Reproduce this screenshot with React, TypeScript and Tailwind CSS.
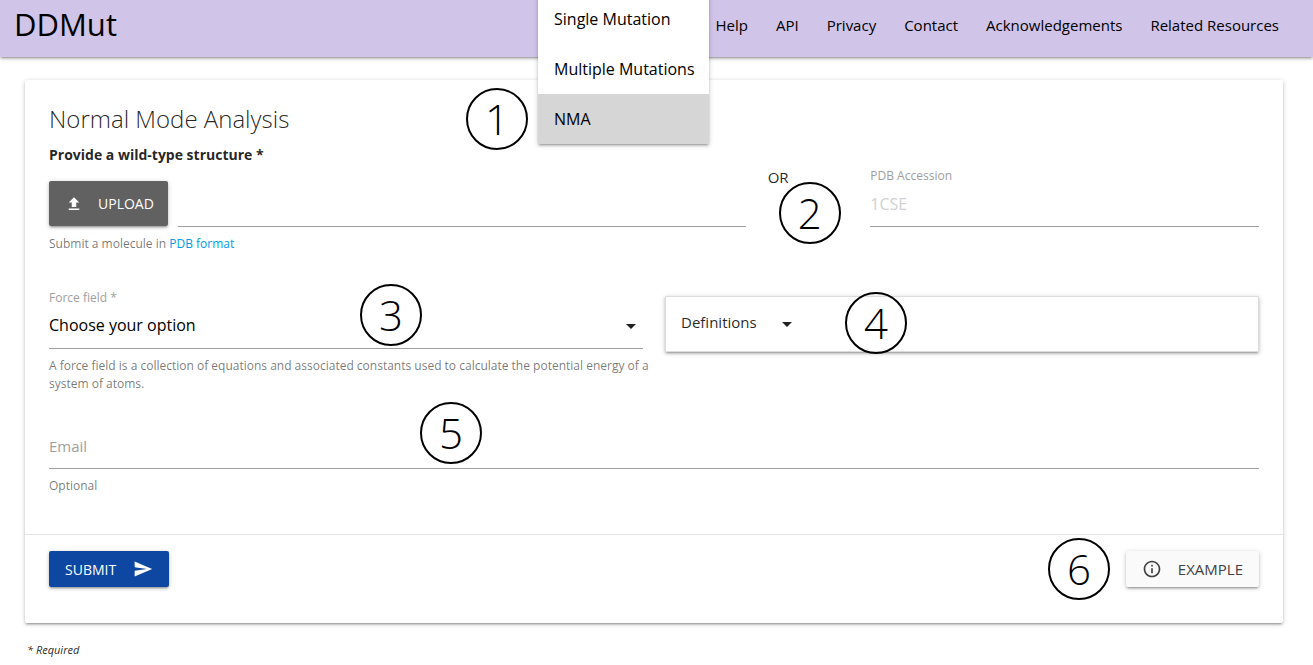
import { MdArrowDropDown, MdFileUpload, MdInfoOutline, MdSend } from "react-icons/md";

const NAV_LINKS = ["Help", "API", "Privacy", "Contact", "Acknowledgements", "Related Resources"];

const RAISED =
  "shadow-[0_2px_2px_0_rgba(0,0,0,0.14),0_3px_1px_-2px_rgba(0,0,0,0.12),0_1px_5px_0_rgba(0,0,0,0.2)]";

function StepMarker({ step, className }: { step: number; className: string }) {
  return (
    <span
      className={`absolute z-20 flex size-[62px] items-center justify-center rounded-full border-2 border-black text-[42px] leading-none font-light text-black ${className}`}
    >
      {step}
    </span>
  );
}

function Header() {
  return (
    <header className={`relative flex h-[57px] items-center justify-between bg-[#d1c4e9] pr-5 pl-3.5 text-black ${RAISED}`}>
      <a href="#home" className="pb-2.5 text-[31px] leading-10">
        DDMut
      </a>
      <nav className="flex pb-2">
        {NAV_LINKS.map((name) => (
          <a key={name} href="#" className="px-3.5 text-[15px] leading-6">
            {name}
          </a>
        ))}
      </nav>
      <div className={`absolute -top-1.5 right-[604px] z-10 w-[171px] bg-white ${RAISED}`}>
        <a href="#single" className="block px-4 py-[13px] text-[16px] leading-6 whitespace-nowrap">
          Single Mutation
        </a>
        <a href="#multiple" className="block px-4 py-[13px] text-[16px] leading-6 whitespace-nowrap">
          Multiple Mutations
        </a>
        <a href="#nma" className="block bg-[#d6d6d6] px-4 py-[13px] text-[16px] leading-6 whitespace-nowrap">
          NMA
        </a>
        <StepMarker step={1} className="right-full bottom-[-6px] mr-2.5" />
      </div>
    </header>
  );
}

export default function App() {
  return (
    <div className="bg-white font-['Open_Sans',sans-serif] text-[15px] text-black/87">
      <Header />
      <main className="pt-[23px] pr-[30px] pl-[25px]">
        <form className={`rounded-xs bg-white ${RAISED}`} onSubmit={(e) => e.preventDefault()}>
          <div className="px-6 pt-[23px]">
            <h1 className="text-[24px] leading-8 font-light">Normal Mode Analysis</h1>
            <p className="pt-2 text-[14px] leading-6 font-bold">Provide a wild-type structure *</p>

            <div className="grid grid-cols-12 gap-x-[22px] pt-px">
              <div className="col-span-7 pt-[13px]">
                <div className="flex items-stretch gap-2.5">
                  <button
                    type="button"
                    className={`flex h-[45px] w-[119px] shrink-0 items-center rounded-xs bg-[#616161] pl-4 text-[14px] text-white ${RAISED}`}
                  >
                    <MdFileUpload className="mr-[15px] size-[18px]" />
                    UPLOAD
                  </button>
                  <input
                    type="text"
                    aria-label="Structure file"
                    className="h-[46px] min-w-0 flex-1 border-b border-[#9e9e9e] outline-none"
                  />
                </div>
                <p className="pt-2 text-[12px] leading-[18px] text-black/54">
                  Submit a molecule in{" "}
                  <a href="#pdb" className="text-[#039be5]">
                    PDB format
                  </a>
                </p>
              </div>
              <div className="relative col-span-1 text-[15px] leading-[18px]">
                OR
                <StepMarker step={2} className="top-[14px] left-[11px]" />
              </div>
              <div className="col-span-4">
                <label htmlFor="pdb" className="block text-[12px] leading-4 text-[#9e9e9e]">
                  PDB Accession
                </label>
                <input
                  id="pdb"
                  type="text"
                  placeholder="1CSE"
                  className="mt-px h-[42px] w-full border-b border-[#9e9e9e] pb-1 text-[16px] outline-none placeholder:text-[#d1d1d1]"
                />
              </div>
            </div>

            <div className="grid grid-cols-12 gap-x-[22px] pt-9">
              <div className="relative col-span-6">
                <label htmlFor="force" className="block text-[12px] leading-[18px] text-[#9e9e9e]">
                  Force field *
                </label>
                <div className="relative">
                  <select
                    id="force"
                    className="h-[42px] w-full appearance-none border-b border-[#9e9e9e] pb-1.5 text-[16px] text-black outline-none"
                  >
                    <option>Choose your option</option>
                  </select>
                  <MdArrowDropDown className="pointer-events-none absolute top-[7px] right-0 size-6" />
                </div>
                <p className="-mr-2 pt-2 text-[12px] leading-[18px] text-black/54">
                  A force field is a collection of equations and associated constants used to calculate the potential
                  energy of a system of atoms.
                </p>
                <StepMarker step={3} className="-top-[5px] left-[311px]" />
              </div>
              <div className="col-span-6 pt-[7px]">
                <div className={`relative border border-[#dddddd] px-[15px] ${RAISED}`}>
                  <button type="button" className="flex h-[54px] items-center gap-[18px] text-[15px]">
                    <span className="pb-1">Definitions</span>
                    <MdArrowDropDown className="size-6" />
                  </button>
                  <StepMarker step={4} className="-top-[5px] left-[179px]" />
                </div>
              </div>
            </div>

            <div className="relative pt-[30px]">
              <label htmlFor="email" className="absolute top-[43px] left-0 text-[15px] leading-5 text-[#9e9e9e]">
                Email
              </label>
              <input
                id="email"
                type="email"
                className="h-[46px] w-full border-b border-[#9e9e9e] text-[15px] outline-none"
              />
              <p className="pt-2 text-[12px] leading-[18px] text-black/54">Optional</p>
              <StepMarker step={5} className="top-[9px] left-[371px]" />
            </div>
          </div>

          <div className="mt-[39px] flex justify-between border-t border-black/10 px-6 pt-4 pb-9">
            <button
              type="submit"
              className={`flex h-9 w-[120px] items-center justify-between rounded-xs bg-[#0d47a1] px-4 text-[14px] text-white ${RAISED}`}
            >
              SUBMIT
              <MdSend className="size-5" />
            </button>
            <div className="relative">
              <StepMarker step={6} className="-top-[13px] right-full mr-4" />
              <button
                type="button"
                className={`flex h-9 w-[133px] items-center justify-between rounded-xs bg-[#fafafa] px-4 text-[15px] text-[#424242] ${RAISED}`}
              >
                <MdInfoOutline className="size-5" />
                EXAMPLE
              </button>
            </div>
          </div>
        </form>
        <p className="pt-[18px] pl-0.5 text-[11px] leading-[18px] italic">* Required</p>
      </main>
    </div>
  );
}
